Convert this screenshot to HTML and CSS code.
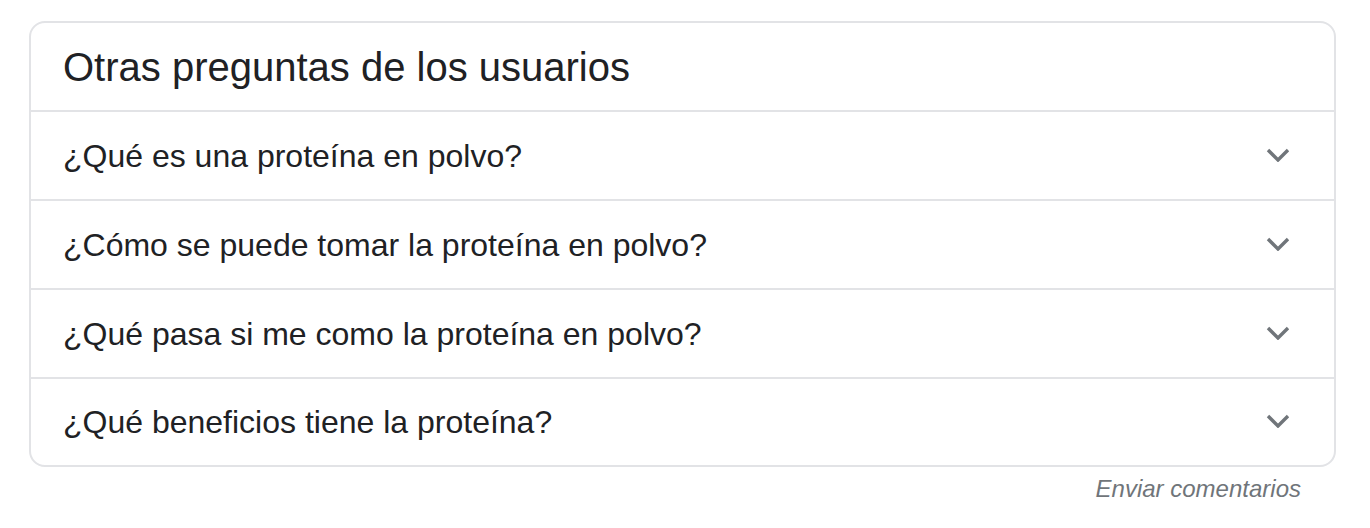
FILE: index.html
```html
<!DOCTYPE html>
<html lang="es">
<head>
<meta charset="utf-8">
<link rel="stylesheet" href="styles.css">
</head>
<body>
<div class="wrap">
  <div class="card">
    <div class="title">Otras preguntas de los usuarios</div>
    <div class="row"><span class="q">¿Qué es una proteína en polvo?</span><svg class="chev" viewBox="0 0 24 14"><path d="M2 2l10 10 10-10" /></svg></div>
    <div class="row"><span class="q">¿Cómo se puede tomar la proteína en polvo?</span><svg class="chev" viewBox="0 0 24 14"><path d="M2 2l10 10 10-10" /></svg></div>
    <div class="row"><span class="q">¿Qué pasa si me como la proteína en polvo?</span><svg class="chev" viewBox="0 0 24 14"><path d="M2 2l10 10 10-10" /></svg></div>
    <div class="row"><span class="q">¿Qué beneficios tiene la proteína?</span><svg class="chev" viewBox="0 0 24 14"><path d="M2 2l10 10 10-10" /></svg></div>
  </div>
  <div class="feedback">Enviar comentarios</div>
</div>
</body>
</html>
```
FILE: styles.css
```css
html, body { margin: 0; padding: 0; background: #fff; }
body { font-family: "Liberation Sans", Arial, sans-serif; color: #202124; }
.wrap { padding: 21px 34px 0 29px; width: 1307px; }
.card {
  border: 2px solid #e2e3e6;
  border-radius: 16px;
  overflow: hidden;
}
.title {
  font-size: 40px;
  height: 89px;
  line-height: 88px;
  padding-left: 32px;
  border-bottom: 2px solid #e2e3e6;
  box-sizing: border-box;
}
.row {
  display: flex;
  align-items: center;
  justify-content: space-between;
  height: 89px;
  box-sizing: border-box;
  padding: 0 44px 0 32px;
  border-bottom: 2px solid #e2e3e6;
}
.row:last-child { border-bottom: none; height: 86px; }
.q { font-size: 32px; line-height: 1; }
.chev { width: 24px; height: 14px; fill: none; stroke: #70757a; stroke-width: 3.4; margin-top: -2px; }
.feedback {
  text-align: right;
  font-style: italic;
  font-size: 24px;
  color: #70757a;
  padding-right: 35px;
  padding-top: 8px;
}
```
